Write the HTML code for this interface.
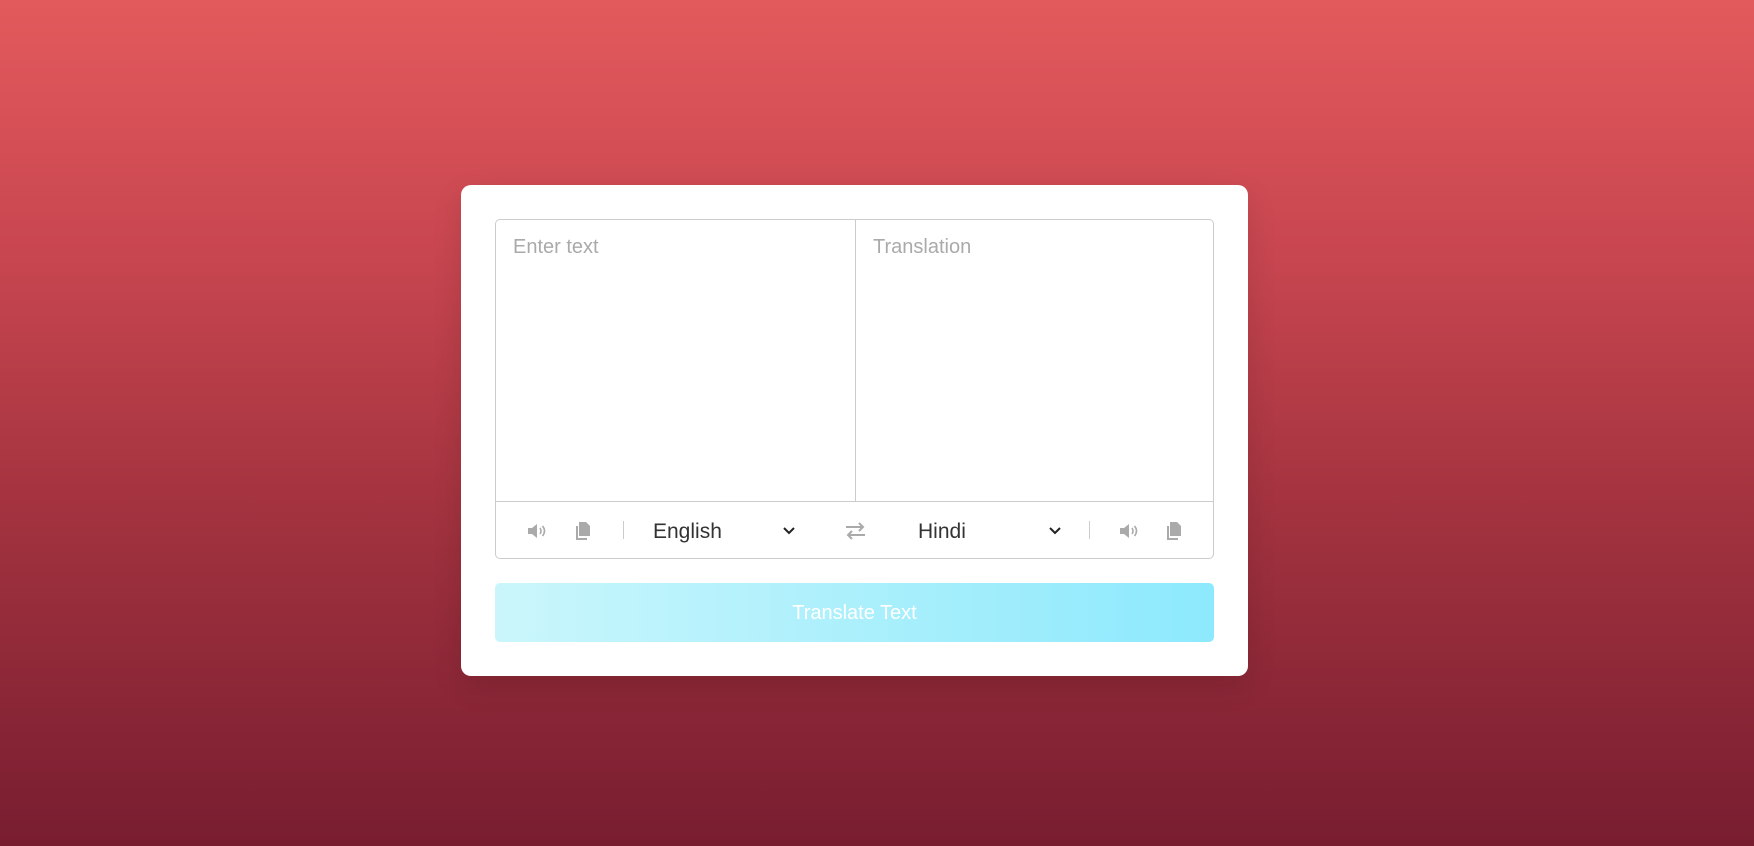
<!DOCTYPE html>
<html><head><meta charset="utf-8"><style>
*{box-sizing:border-box;margin:0;padding:0}
html,body{width:1754px;height:846px;overflow:hidden}
body{background:linear-gradient(180deg,#e35a5c 0%,#c84650 30%,#a3333f 60%,#781d30 100%);font-family:"Liberation Sans",sans-serif;position:relative}
.card{position:absolute;left:461px;top:185px;width:787px;height:491px;background:#fff;border-radius:10px;box-shadow:0 10px 30px rgba(0,0,0,.12)}
.box{position:absolute;left:34px;top:34px;width:719px;height:340px;border:1px solid #ccc;border-radius:5px}
.mid{position:absolute;left:359px;top:0;width:1px;height:281px;background:#ccc}
.hr{position:absolute;left:0;top:281px;width:100%;height:1px;background:#ccc}
.ph{position:absolute;top:16px;font-size:20px;color:#aaa}
.ab{position:absolute;font-size:21px;color:#333;top:300px}
.ic{position:absolute;top:303px}
.sep{position:absolute;top:301px;width:1px;height:18px;background:#ccc}
.btn{position:absolute;left:34px;top:398px;width:719px;height:59px;border-radius:5px;background:linear-gradient(90deg,#caf6fb,#8de9fd);color:#fff;font-size:20px;text-align:center;line-height:61px}
</style></head><body>
<div class="card">
<div class="box">
<div class="mid"></div><div class="hr"></div>
<div class="ph" style="left:17px">Enter text</div>
<div class="ph" style="left:377px">Translation</div>
<svg class="ic" style="left:31px" width="20" height="16" viewBox="0 0 20 16"><path d="M1 5h4l5-4v14l-5-4H1z" fill="#aaa"/><path d="M13 5q2 3 0 6M15.5 3q4 5 0 10" stroke="#aaa" stroke-width="1.6" fill="none"/></svg>
<svg class="ic" style="left:79px;top:302px" width="16" height="18" viewBox="0 0 16 18"><path d="M4 0h7l4 4v10H4z" fill="#aaa"/><path d="M1 4h2v12h9v2H1z" fill="#aaa"/></svg>
<div class="sep" style="left:127px"></div>
<div class="ab" style="left:157px">English</div>
<svg class="ic" style="left:286px;top:306px" width="14" height="10" viewBox="0 0 14 10"><path d="M2 2l5 5 5-5" stroke="#222" stroke-width="2" fill="none"/></svg>
<svg class="ic" style="left:349px;top:302px" width="21" height="18" viewBox="0 0 21 18"><path d="M1 5h17M14 1l4 4-4 4M20 13H3M7 9l-4 4 4 4" stroke="#aaa" stroke-width="2" fill="none"/></svg>
<div class="ab" style="left:422px">Hindi</div>
<svg class="ic" style="left:552px;top:306px" width="14" height="10" viewBox="0 0 14 10"><path d="M2 2l5 5 5-5" stroke="#222" stroke-width="2" fill="none"/></svg>
<div class="sep" style="left:593px"></div>
<svg class="ic" style="left:623px" width="20" height="16" viewBox="0 0 20 16"><path d="M1 5h4l5-4v14l-5-4H1z" fill="#aaa"/><path d="M13 5q2 3 0 6M15.5 3q4 5 0 10" stroke="#aaa" stroke-width="1.6" fill="none"/></svg>
<svg class="ic" style="left:670px;top:302px" width="16" height="18" viewBox="0 0 16 18"><path d="M4 0h7l4 4v10H4z" fill="#aaa"/><path d="M1 4h2v12h9v2H1z" fill="#aaa"/></svg>
</div>
<div class="btn">Translate Text</div>
</div>
</body></html>
